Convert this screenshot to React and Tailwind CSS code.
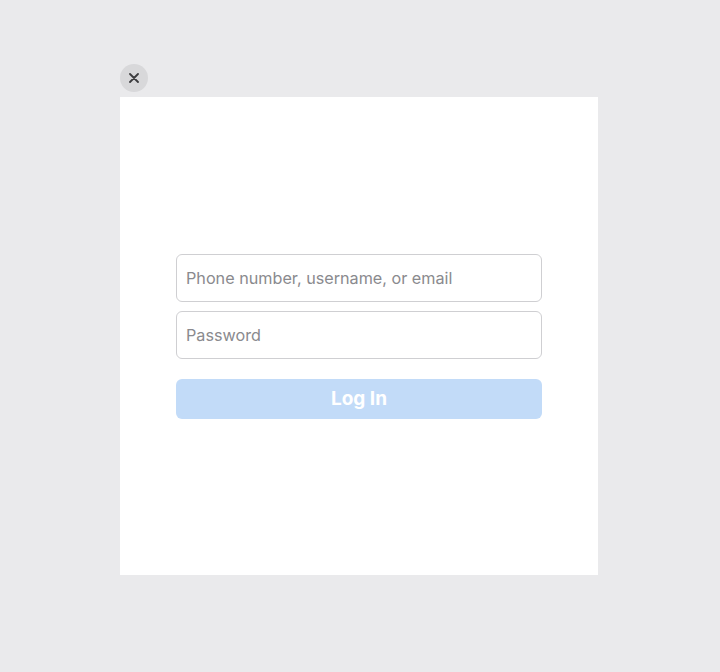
export default function App() {
  return (
    <div className="w-[720px] h-[672px] bg-[#eaeaec] flex flex-col" style={{ fontFamily: 'Inter, "Liberation Sans", sans-serif' }}>
      <div className="pl-[120px] pt-[64px]">
        <div className="flex">
          <button className="w-7 h-7 rounded-full bg-[#d8d8da] flex items-center justify-center">
            <svg width="10" height="10" viewBox="0 0 10 10">
              <path d="M1 1L9 9M9 1L1 9" stroke="#3c3c3e" strokeWidth="1.8" strokeLinecap="round" />
            </svg>
          </button>
        </div>
        <div className="mt-[5px] w-[478px] h-[478px] bg-white flex flex-col items-center justify-center">
          <div className="w-[366px] flex flex-col">
            <div className="h-12 rounded-[6px] border border-[#cfcfd2] flex items-center px-[9px] pt-[2px] text-[16.2px] text-[#8a8a8e]">
              Phone number, username, or email
            </div>
            <div className="mt-[9px] h-12 rounded-[6px] border border-[#cfcfd2] flex items-center px-[9px] pt-[2px] text-[16.2px] text-[#8a8a8e]">
              Password
            </div>
            <div className="mt-5 h-10 rounded-[6px] bg-[#c2dbf8] flex items-center justify-center pt-[2px] text-white font-bold text-[19px]">
              Log In
            </div>
          </div>
        </div>
      </div>
    </div>
  );
}
